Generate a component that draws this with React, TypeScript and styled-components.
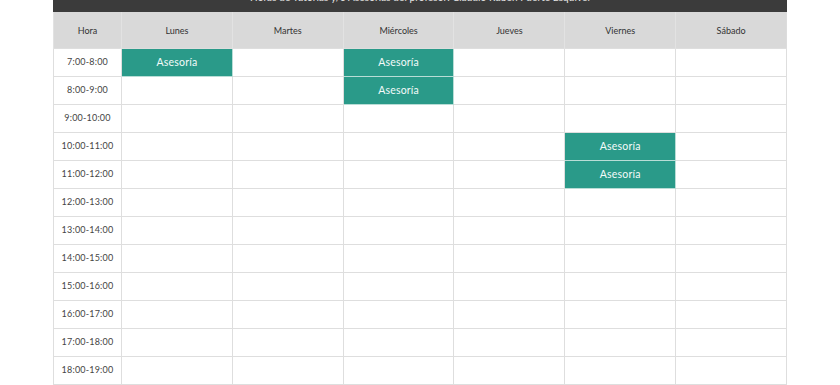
import React from "react";
import styled, { createGlobalStyle } from "styled-components";

const GlobalStyle = createGlobalStyle`
    html, body {
        margin: 0;
        padding: 0;
        background: #ffffff;
        font-family: Lato, "Open Sans", sans-serif;
        overflow: hidden;
    }
`;

const days = ["Lunes", "Martes", "Miércoles", "Jueves", "Viernes", "Sábado"];

const hours = [
    "7:00-8:00", "8:00-9:00", "9:00-10:00", "10:00-11:00", "11:00-12:00",
    "12:00-13:00", "13:00-14:00", "14:00-15:00", "15:00-16:00", "16:00-17:00",
    "17:00-18:00", "18:00-19:00",
];

// hour index -> day indexes with an asesoría
const booked: Record<number, number[]> = {
    0: [0, 2],
    1: [2],
    3: [4],
    4: [4],
};

const Page = styled.div`
    width: 734px;
    margin: -16px auto 0 53px;
`;

const TitleBar = styled.div`
    height: 28px;
    line-height: 27px;
    background: #3b3b3b;
    color: #e6e6e6;
    font-size: 10px;
    text-align: center;
    letter-spacing: 0.1px;
`;

const Table = styled.table`
    width: 100%;
    border-collapse: collapse;
    table-layout: fixed;
    border-left: 1px solid #dcdcdc;
    border-right: 1px solid #dcdcdc;
`;

const HeadCell = styled.th<{ $narrow?: boolean }>`
    width: ${(p) => (p.$narrow ? "67px" : "auto")};
    height: 36px;
    padding: 0;
    background: #d9d9d9;
    color: #333;
    font-size: 9px;
    font-weight: 400;
    border-left: 1px solid #e2e2e2;
    text-align: center;
`;

const Cell = styled.td<{ $busy?: boolean }>`
    height: 25px;
    padding: 0 0 2px;
    text-align: center;
    font-size: ${(p) => (p.$busy ? "10.5px" : "9px")};
    color: ${(p) => (p.$busy ? "#f4fbfa" : "#444")};
    background: ${(p) => (p.$busy ? "#2a9a89" : "#ffffff")};
    border: 1px solid ${(p) => (p.$busy ? "#b9ddd6" : "#dedede")};
    border-top-color: #dedede;
    letter-spacing: 0.2px;
`;

export default function App() {
    return (
        <>
            <GlobalStyle />
            <Page>
                <TitleBar>
                    Horas de Tutorías y/o Asesorías del profesor: Claudio Rubén Puerte Esquivel
                </TitleBar>
                <Table>
                    <thead>
                        <tr>
                            <HeadCell $narrow>Hora</HeadCell>
                            {days.map((d) => (
                                <HeadCell key={d}>{d}</HeadCell>
                            ))}
                        </tr>
                    </thead>
                    <tbody>
                        {hours.map((h, i) => (
                            <tr key={h}>
                                <Cell>{h}</Cell>
                                {days.map((d, j) => {
                                    const busy = (booked[i] || []).includes(j);
                                    return (
                                        <Cell key={d} $busy={busy}>
                                            {busy ? "Asesoría" : ""}
                                        </Cell>
                                    );
                                })}
                            </tr>
                        ))}
                    </tbody>
                </Table>
            </Page>
        </>
    );
}
